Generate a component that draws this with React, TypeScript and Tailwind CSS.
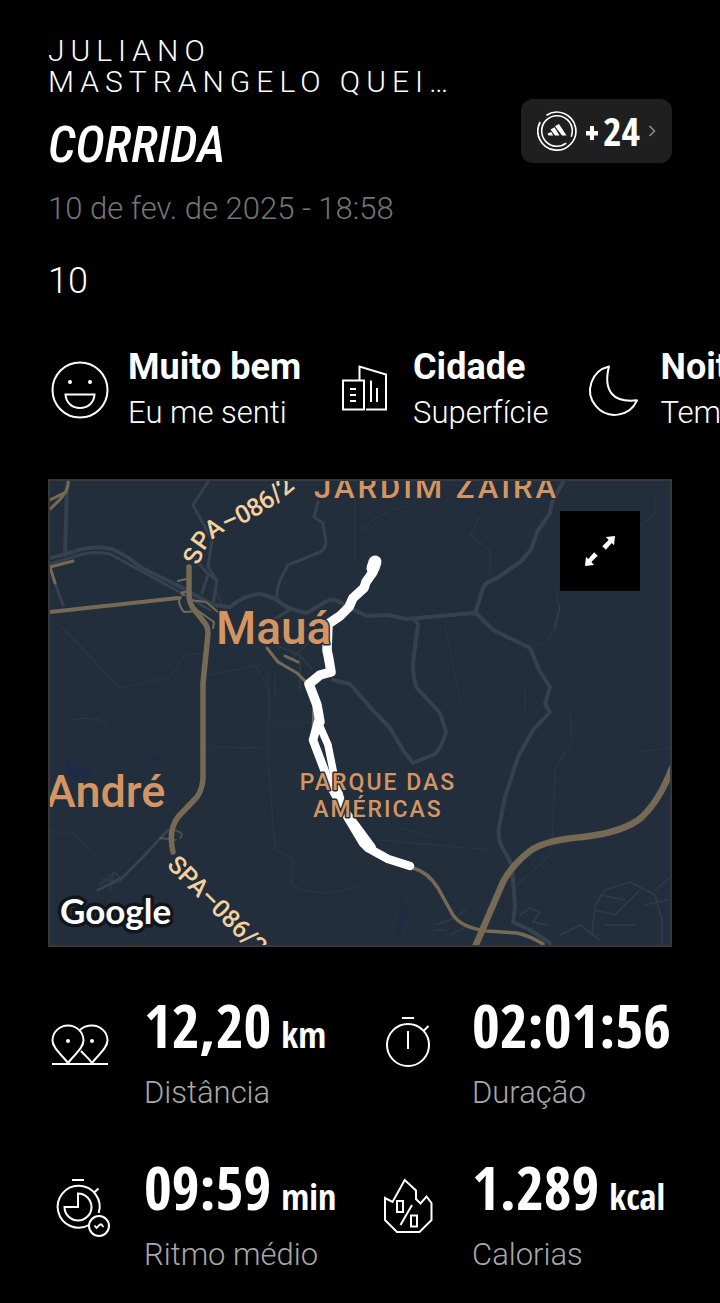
import type { ReactNode } from "react";

function Glyph({ children }: { children: ReactNode }) {
  return (
    <svg
      viewBox="0 0 64 64"
      className="size-16 shrink-0"
      fill="none"
      stroke="white"
      strokeWidth="2"
      aria-hidden="true"
    >
      {children}
    </svg>
  );
}

function SmileIcon() {
  return (
    <Glyph>
      <circle cx="32" cy="32" r="27.5" />
      <circle cx="22" cy="24" r="2" fill="white" stroke="none" />
      <circle cx="42" cy="24" r="2" fill="white" stroke="none" />
      <path d="M17.5 36.5H46.5C46 45 39.5 50 32 50S18 45 17.5 36.5Z" />
    </Glyph>
  );
}

function CityIcon() {
  return (
    <Glyph>
      <path d="M10 22.5H31V51.5H10Z" />
      <path d="M26.5 22.5V8.5L53 16.5V51.5H33" />
      <path d="M38 22.5V44M44 30V44M17 31H23M17 37H23M17 43H23" />
    </Glyph>
  );
}

function MoonIcon() {
  return (
    <Glyph>
      <path d="M28 8.5A24.5 24.5 0 1 0 56 42.3C44 43.5 36 42 31 36S24.5 22 28 8.5Z" strokeLinejoin="round" />
    </Glyph>
  );
}

function PinsIcon() {
  return (
    <Glyph>
      <path d="M20 52C15 45 4.5 37.5 4.5 29.5A15.5 15 0 0 1 35.5 29.5C35.5 37.5 25 45 20 52Z" />
      <path d="M32 19C35 16 39 14.5 44 14.5A15.5 15 0 0 1 59.5 29.5C59.5 37.500 49 45 44 52C41 47.500 37 44.500 33 40" />
      <path d="M4 53H60" />
      <circle cx="20" cy="30" r="2" fill="white" stroke="none" />
      <circle cx="44" cy="30" r="2" fill="white" stroke="none" />
    </Glyph>
  );
}

function StopwatchIcon() {
  return (
    <Glyph>
      <circle cx="32" cy="34" r="21" />
      <path d="M32 20V38M26 7H38M47.5 20L52.5 15" />
    </Glyph>
  );
}

function PaceIcon() {
  return (
    <Glyph>
      <path d="M50.7 40A21 21 0 1 0 41 52" />
      <path d="M30 34V20.5A13.5 13.5 0 1 1 16.5 34Z" />
      <path d="M24 7H36M45.5 20L50.5 15.5" />
      <circle cx="51" cy="53" r="10" />
      <path d="M46.5 52.5L48.5 55L52 51.5L53.5 51.5L55.5 54" strokeWidth="1.8" />
    </Glyph>
  );
}

function CaloriesIcon() {
  return (
    <Glyph>
      <path d="M28.7 7L40 17.5V26L44.5 30.5L50.5 23.5L55.5 30V47L43.5 59H21L9 47V25L16.5 29Z" />
      <path d="M21 28H27V39H21ZM35 42.5H41V53.5H35ZM36 32L24.5 52" />
    </Glyph>
  );
}

function PointsBadge() {
  return (
    <button
      type="button"
      aria-label="+24 pontos"
      className="flex h-16 shrink-0 items-center rounded-xl bg-[#1f1f1f] px-4"
    >
      <svg viewBox="0 0 40 40" className="size-10" fill="none" stroke="white" aria-hidden="true">
        <circle cx="20" cy="20" r="15.3" strokeWidth="1.6" strokeDasharray="88 8.1" strokeDashoffset="-14" />
        <path d="M9.5 4.2A19 19 0 1 1 3.2 11" strokeWidth="1.7" />
        <g fill="white" stroke="none">
          <path d="M10.5 22.5L14.2 21L16.2 24.6H11.5Z" />
          <path d="M13.5 18.5L17.5 16.2L22.5 24.6H18Z" />
          <path d="M18 15.2L22 13L29.5 24.6H25Z" />
        </g>
      </svg>
      <span className="ml-2 flex items-center gap-1 font-['Open_Sans_Condensed','Roboto_Condensed',sans-serif] text-[40px] leading-none font-bold">
        <svg viewBox="0 0 14 16" className="mt-1 h-4 w-3.5" fill="white" aria-hidden="true">
          <path d="M5 1H9V6H13V10.5H9V15H5V10.5H1V6H5Z" />
        </svg>
        24
      </span>
      <svg viewBox="0 0 8 12" className="ml-2 h-3 w-2" fill="none" stroke="#8a8a8a" strokeWidth="1.6" aria-hidden="true">
        <path d="M1.5 1L6.5 6L1.5 11" />
      </svg>
    </button>
  );
}

function Tag({ icon, title, caption }: { icon: ReactNode; title: string; caption: string }) {
  return (
    <li className="flex shrink-0 items-center gap-4">
      {icon}
      <div className="flex flex-col gap-1.5 whitespace-nowrap">
        <span className="text-[36px] leading-10 font-bold">{title}</span>
        <span className="text-[31px] leading-10 font-light">{caption}</span>
      </div>
    </li>
  );
}

function Stat({ icon, value, unit, label }: { icon: ReactNode; value: string; unit?: string; label: string }) {
  return (
    <div className="flex min-w-0 items-start gap-8">
      <div className="mt-4.5 shrink-0">{icon}</div>
      <dl className="flex flex-col-reverse gap-4.5 whitespace-nowrap">
        <dt className="text-[31px] leading-9 font-light text-[#a8a8a8]">{label}</dt>
        <dd className="flex items-baseline gap-2.5 font-['Open_Sans_Condensed','Roboto_Condensed',sans-serif] font-bold">
          <span className="text-[60px] leading-16">{value}</span>
          {unit && <span className="text-[36px] leading-none">{unit}</span>}
        </dd>
      </dl>
    </div>
  );
}

function RouteMap() {
  return (
    <section aria-label="Mapa do percurso" className="relative border-2 border-[#38373a] bg-[#232e3c]">
      <svg viewBox="50 481 620 464" className="block h-auto w-full" fill="none" strokeLinejoin="round" strokeLinecap="round">
        <defs>
          <path id="spa-north" d="M199 566C203 550 210 540 222 533C242 525 266 514 300 484" />
          <path id="spa-south" d="M166 866L206 906L262 962" />
        </defs>

        <g stroke="#2b3745" strokeWidth="1.2">
          <path d="M60 625L120 688L170 677L185 655L215 652" />
          <path d="M268 670V760L275 850L292 858V885Q320 900 358 886" />
          <path d="M205 747L268 748M268 723H310" />
          <path d="M362 530Q375 515 405 506M482 512L470 535L490 550V575" />
          <path d="M445 625L460 700M555 585L560 610L548 640L535 645M525 690V710" />
          <path d="M570 715L572 740L555 770L552 845L550 855L517 885" />
          <path d="M636 752L670 748M400 828L435 838M380 840L490 850M355 500V560" />
          <path d="M655 500V515L640 525M50 830L75 835L90 850M210 675L260 665" />
          <path d="M255 665L270 690V720M275 675V695M70 720Q100 715 107 725" />
        </g>

        <g stroke="#2f3b49" strokeWidth="1.6">
          <path d="M435 925L455 918L465 910M445 930L435 930M450 935L470 925" />
          <path d="M592 935L595 905L605 890L630 882L655 895L662 920V945" />
          <path d="M595 910L615 915L640 890M600 895L625 900M605 925L635 925M655 890L670 878M645 905L668 900M560 935L580 925L600 940" />
          <path d="M520 915L530 908L540 912L533 922L548 925" />
          <path d="M100 885L115 872L122 880L108 886M113 872L110 890M103 879L122 882" />
          <path d="M263 640L300 655L312 670M275 658L305 680M300 655V690" />
          <path d="M290 660L312 640M215 590L225 610M560 605L555 630" />
        </g>

        <g fill="#1e2b48" stroke="none">
          <path d="M66 760L80 768L92 770L90 778L74 778L66 770Z" />
          <path d="M148 756L165 755V759L148 760Z" />
          <path d="M403 895L404 915L400 935L396 937Z" />
          <path d="M635 630L645 632L648 638Z" opacity="0.6" />
          <path d="M377 908L382 909L380 912Z" />
        </g>

        <g stroke="#35414e" strokeWidth="4">
          <path d="M65 555L67 485" />
          <path d="M50 558L73 552Q90 545 112 549Q128 556 140 567L177 585L213 605L230 607Q244 595 260 594Q270 596 277 600Q286 609 307 613L325 602Q335 596 345 606L367 616L387 615L407 619L473 613" />
          <path d="M50 564L76 556Q92 550 110 554L176 590L210 610" strokeWidth="3" />
          <path d="M475 614L483 588Q485 582 497 578L520 562Q530 552 532 547L537 532L550 513L552 502L563 482" />
          <path d="M477 614L493 630L530 648L540 672L550 687L545 704L550 712L533 730L518 757L505 797L499 827Q498 840 502 847L512 865L515 907L513 922L530 930L550 943" />
          <path d="M414 619L418 624L413 663Q413 680 417 688L440 713L446 732Q440 752 433 755L413 763L403 750L390 728L370 707L350 684L333 680" />
          <path d="M208 482L193 505L212 540L208 567L217 580L213 603M208 575L202 593" strokeWidth="3" />
          <path d="M318 502L314 517L323 523L326 542Q325 550 320 552L288 565L280 580Q276 590 277 600L290 610L276 618" strokeWidth="3" />
          <path d="M192 555L206 572L216 580" strokeWidth="3" />
          <path d="M168 830L143 857L123 877L98 890" strokeWidth="3" />
          <path d="M55 583L63 605" strokeWidth="3" />
        </g>

        <g stroke="#776a54" strokeWidth="3">
          <path d="M50 612L178 598" strokeWidth="4" />
          <path d="M68 481Q70 492 50 509M50 500L66 492M50 567L73 561M50 567L55 583" />
          <path d="M267 648L278 662L297 673L307 683M314 700L313 735M285 656L298 662" />
          <path d="M178 581L186 579M181 597Q176 602 184 612L198 611M190 600L206 602L218 612M197 610L214 622L213 628M184 595Q178 592 186 592" strokeWidth="2" />
          <path d="M160 838L176 840M173 830Q186 833 180 838" strokeWidth="2" opacity="0.5" />
          <path d="M413 868Q428 872 438 888L453 915Q462 928 487 931L517 933Q530 936 543 944" strokeWidth="3.5" />
          <path d="M189 567V594Q189 602 193 608L204 622Q208 626 208 634L203 683V777Q203 788 197 797L178 817Q168 830 173 852" strokeWidth="5.5" />
          <path d="M672 768Q660 800 642 817Q625 832 583 837Q545 840 530 851Q512 865 503 882L475 947" strokeWidth="6.5" />
        </g>

        <g stroke="white" strokeWidth="9.5">
          <path d="M374 566L373 572L366 582L364 588L353 598L349 607L340 616L328 624L327 650L329 660L331 672L320 675L309 684L317 705L320 722" />
          <path d="M318 722L313 740L330 785L348 818L363 843L368 848L388 859L410 866" strokeWidth="8.5" />
          <path d="M318 722L328 745L334 775L343 808L358 828L372 847" strokeWidth="7.5" />
          <path d="M375 562L373 568" strokeWidth="13" />
        </g>

        <g
          fill="#d59563"
          stroke="#232e3c"
          strokeWidth="3"
          paintOrder="stroke"
          className="font-['Roboto',sans-serif]"
          fontWeight="500"
        >
          <text x="216" y="644" fontSize="46">Mauá</text>
          <text x="46" y="807" fontSize="45">André</text>
          <text x="314" y="498" fontSize="31" letterSpacing="3">JARDIM ZAÍRA</text>
          <text x="378" y="790" fontSize="23" letterSpacing="2" textAnchor="middle">PARQUE DAS</text>
          <text x="378" y="817" fontSize="23" letterSpacing="2" textAnchor="middle">AMÉRICAS</text>
          <g fill="#f3d19c" fontSize="25">
            <text><textPath href="#spa-north">SPA–086/2</textPath></text>
            <text><textPath href="#spa-south">SPA–086/2</textPath></text>
          </g>
        </g>
        <text
          x="60"
          y="924"
          fontSize="35"
          fontWeight="700"
          fill="white"
          stroke="#11151c"
          strokeWidth="7"
          paintOrder="stroke"
          className="font-['Lato',sans-serif]"
        >
          Google
        </text>
      </svg>
      <button
        type="button"
        aria-label="Expandir mapa"
        className="absolute top-7.5 right-7.5 flex size-20 items-center justify-center bg-black"
      >
        <svg viewBox="0 0 80 80" className="size-20" fill="white" aria-hidden="true">
          <path d="M46 26L55 25L54 34.3L51.8 32L45.8 38.8L42.3 35.3L48.6 29Z" />
          <path d="M34 54L25 55L26 45.7L28.2 48L34.2 41.2L37.7 44.7L31.4 51Z" />
        </svg>
      </button>
    </section>
  );
}

export default function App() {
  return (
    <main className="min-h-screen overflow-hidden bg-black px-12 pt-[35px] pb-4 font-['Roboto',sans-serif] text-white">
      <header className="flex items-center justify-between">
        <div>
          <p className="text-[30px] leading-[31px] font-light tracking-[6px]">
            JULIANO
            <br />
            MASTRANGELO QUEI…
          </p>
          <h1 className="mt-4 font-['Roboto_Condensed','Roboto',sans-serif] text-[50px] leading-16 font-medium italic">
            CORRIDA
          </h1>
          <p className="mt-3.5 text-[31px] leading-9 font-light text-[#757575]">10 de fev. de 2025 - 18:58</p>
        </div>
        <PointsBadge />
      </header>

      <p className="mt-8 text-[36px] leading-11 font-light">10</p>

      <ul className="mt-11 -mr-12 flex gap-8 overflow-hidden">
        <Tag icon={<SmileIcon />} title="Muito bem" caption="Eu me senti" />
        <Tag icon={<CityIcon />} title="Cidade" caption="Superfície" />
        <Tag icon={<MoonIcon />} title="Noite" caption="Tempo" />
      </ul>

      <div className="mt-11.5">
        <RouteMap />
      </div>

      <div className="mt-11.5 grid grid-cols-2 gap-x-8 gap-y-11">
        <Stat icon={<PinsIcon />} value="12,20" unit="km" label="Distância" />
        <Stat icon={<StopwatchIcon />} value="02:01:56" label="Duração" />
        <Stat icon={<PaceIcon />} value="09:59" unit="min" label="Ritmo médio" />
        <Stat icon={<CaloriesIcon />} value="1.289" unit="kcal" label="Calorias" />
      </div>
    </main>
  );
}
